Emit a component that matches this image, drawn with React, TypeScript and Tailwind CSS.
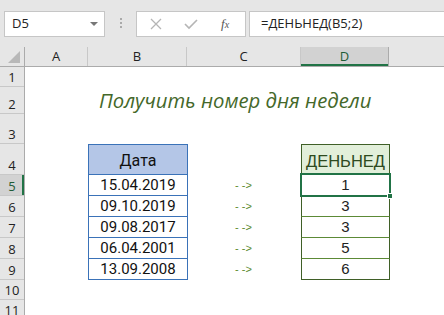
const rows = [
  { n: 1, h: 'h-[20px]' },
  { n: 2, h: 'h-[27px]' },
  { n: 3, h: 'h-[30px]' },
  { n: 4, h: 'h-[31px]' },
  { n: 5, h: 'h-[21px]' },
  { n: 6, h: 'h-[21px]' },
  { n: 7, h: 'h-[21px]' },
  { n: 8, h: 'h-[21px]' },
  { n: 9, h: 'h-[21px]' },
  { n: 10, h: 'h-[20px]' },
  { n: 11, h: 'h-[20px]' },
]

const data = [
  { date: '15.04.2019', day: 1 },
  { date: '09.10.2019', day: 3 },
  { date: '09.08.2017', day: 3 },
  { date: '06.04.2001', day: 5 },
  { date: '13.09.2008', day: 6 },
]

const cols = [
  { l: 'A', w: 'w-[63px]' },
  { l: 'B', w: 'w-[99px]' },
  { l: 'C', w: 'w-[114px]' },
  { l: 'D', w: 'w-[88px]' },
]

function Toolbar() {
  return (
    <div className="h-[47px] bg-[#e6e6e6] flex items-start pt-[11px] pl-[4px] font-['Open_Sans',sans-serif]">
      <div className="w-[101px] h-[26px] bg-white border border-[#c6c6c6] flex items-center justify-between pl-[7px] pr-[4px] text-[13px] text-[#222]">
        <span>D5</span>
        <span className="w-0 h-0 border-l-[4px] border-r-[4px] border-t-[4px] border-l-transparent border-r-transparent border-t-[#777] mr-[2px]" />
      </div>
      <div className="w-[31px] flex flex-col items-center gap-[2px] pt-[7px]">
        <span className="w-[2px] h-[2px] bg-[#aaa]" />
        <span className="w-[2px] h-[2px] bg-[#aaa]" />
        <span className="w-[2px] h-[2px] bg-[#aaa]" />
      </div>
      <div className="w-[110px] h-[26px] bg-white border border-[#c6c6c6] flex items-center">
        <svg width="12" height="12" viewBox="0 0 12 12" className="ml-[13px]">
          <path d="M1 1 L11 11 M11 1 L1 11" stroke="#b5b5b5" strokeWidth="1.3" fill="none" />
        </svg>
        <svg width="14" height="12" viewBox="0 0 14 12" className="ml-[22px]">
          <path d="M1 6 L5 10 L13 2" stroke="#b5b5b5" strokeWidth="1.6" fill="none" />
        </svg>
        <span className="ml-[23px] text-[13px] italic text-[#555] font-['Liberation_Serif',serif]">
          f<span className="text-[10px]">x</span>
        </span>
      </div>
      <div className="ml-[3px] flex-1 h-[26px] bg-white border border-[#c6c6c6] border-r-0 flex items-center pl-[11px] text-[13px] text-[#222]">
        =ДЕНЬНЕД(B5;2)
      </div>
    </div>
  )
}

function Header() {
  return (
    <div className="flex h-[20px] bg-[#e6e6e6] border-b border-[#ababab] text-[13px] text-[#222] font-['Open_Sans',sans-serif]">
      <div className="w-[25px] h-full border-r border-[#ababab] flex items-end justify-end pr-[4px] pb-[3px]">
        <svg width="12" height="12" viewBox="0 0 12 12">
          <polygon points="12,0 12,12 0,12" fill="#b8b8b8" />
        </svg>
      </div>
      {cols.map((c) => (
        <div
          key={c.l}
          className={`${c.w} h-full flex items-center justify-center border-r ${
            c.l === 'D' ? 'bg-[#d2d2d2] border-[#ababab] text-[#1f5c36] shadow-[inset_0_-2px_0_#217346]' : 'border-[#c8c8c8]'
          }`}
        >
          {c.l}
        </div>
      ))}
      <div className="flex-1" />
    </div>
  )
}

export default function App() {
  return (
    <div className="w-[444px] h-[315px] overflow-hidden bg-white relative">
      <Toolbar />
      <Header />
      <div className="flex">
        <div className="w-[25px] bg-[#e6e6e6] border-r border-[#ababab] font-['Open_Sans',sans-serif] text-[13px]">
          {rows.map((r) => (
            <div
              key={r.n}
              className={`${r.h} flex items-end justify-center leading-[18px] border-b border-[#c8c8c8] ${
                r.n === 5 ? 'bg-[#d2d2d2] text-[#1f5c36] shadow-[inset_-2px_0_0_#217346]' : 'text-[#222]'
              }`}
            >
              {r.n}
            </div>
          ))}
        </div>
        <div className="flex-1">
          <div className="h-[20px]" />
          <div className="h-[27px] flex items-center pl-[74px] text-[20.3px] italic text-[#44682a] font-['Open_Sans',sans-serif] whitespace-nowrap">
            Получить номер дня недели
          </div>
          <div className="h-[30px]" />
          <div className="flex h-[31px]">
            <div className="w-[63px]" />
            <div className="w-[100px] -mr-[1px] border border-[#3a72b8] bg-[#b4c6e7] flex items-center justify-center pt-[3px] text-[16px] text-[#111] font-['Roboto',sans-serif]">
              Дата
            </div>
            <div className="w-[114px]" />
            <div className="w-[89px] border border-[#3f5f27] bg-[#e2efda] flex items-center justify-center pt-[4px] text-[16.5px] text-[#2e4a1e] font-['Liberation_Sans',sans-serif]">
              ДЕНЬНЕД
            </div>
          </div>
          {data.map((d, i) => (
            <div key={d.date} className="flex h-[21px]">
              <div className="w-[63px]" />
              <div className="w-[100px] -mr-[1px] border border-t-0 border-[#3a72b8] flex items-center justify-center pt-[1px] text-[15px] text-[#111] font-['Roboto',sans-serif]">
                {d.date}
              </div>
              <div className="w-[114px] flex items-center pl-[48px] text-[11px] text-[#5a8a2e] font-['Liberation_Sans',sans-serif]">
                - -&gt;
              </div>
              <div
                className={`w-[89px] border-l border-r border-[#3f5f27] border-b ${
                  i < 4 ? 'border-b-[#5c8a36]' : ''
                } flex items-center justify-center pt-[1px] text-[15px] text-[#222] font-['Liberation_Sans',sans-serif]`}
              >
                {d.day}
              </div>
            </div>
          ))}
        </div>
      </div>
      <div className="absolute left-[300px] top-[173px] w-[91px] h-[24px] border-2 border-[#217346]" />
      <div className="absolute left-[387px] top-[193px] w-[6px] h-[6px] bg-[#217346] border border-white" />
    </div>
  )
}
